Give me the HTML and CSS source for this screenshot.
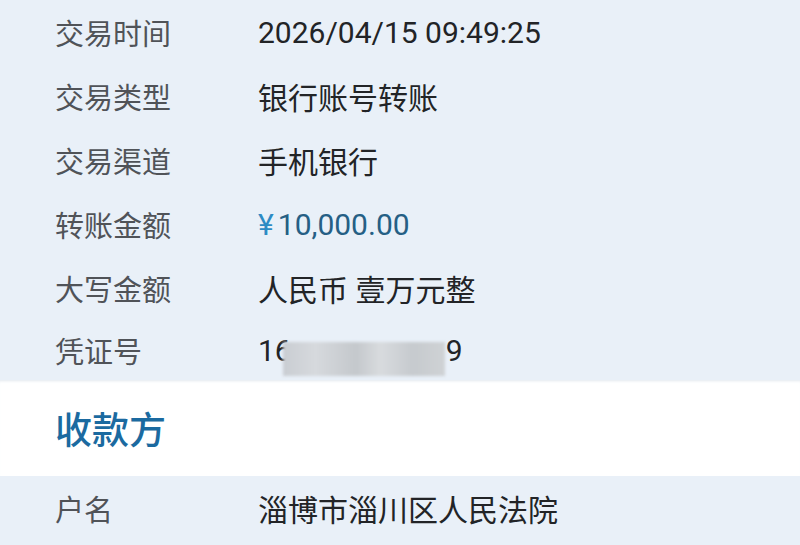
FILE: index.html
```html
<!DOCTYPE html>
<html lang="zh-CN">
<head>
<meta charset="utf-8">
<link rel="stylesheet" href="styles.css">
</head>
<body>
<div class="page">
  <section class="group">
    <div class="row"><span class="label">交易时间</span><span class="value">2026/04/15 09:49:25</span></div>
    <div class="row"><span class="label">交易类型</span><span class="value">银行账号转账</span></div>
    <div class="row"><span class="label">交易渠道</span><span class="value">手机银行</span></div>
    <div class="row"><span class="label">转账金额</span><span class="value amount"><span class="yen">¥</span>10,000.00</span></div>
    <div class="row"><span class="label">大写金额</span><span class="value">人民币 壹万元整</span></div>
    <div class="row last"><span class="label">凭证号</span><span class="value voucher">16<span class="gap"></span>9<span class="blur"></span></span></div>
  </section>
  <div class="section-title">收款方</div>
  <section class="group">
    <div class="row"><span class="label">户名</span><span class="value">淄博市淄川区人民法院</span></div>
  </section>
</div>
</body>
</html>
```
FILE: styles.css
```css
html, body {
  margin: 0;
  padding: 0;
}
body {
  background: #e9f0f8;
  font-family: Roboto, "Noto Sans CJK SC", sans-serif;
  width: 800px;
  height: 545px;
  overflow: hidden;
}
.page {
  display: flex;
  flex-direction: column;
}
.group {
  background: #e9f0f8;
  display: flex;
  flex-direction: column;
}
.row {
  display: flex;
  align-items: center;
  height: 64px;
  padding-left: 55px;
}
.row.last {
  height: 60px;
}
.label {
  width: 203px;
  font-size: 29px;
  color: #505358;
  font-family: "Noto Sans CJK SC", sans-serif;
}
.value {
  font-size: 30px;
  color: #222427;
}
.amount {
  color: #255f85;
}
.yen {
  color: #2d8bc4;
  margin-right: 4px;
}
.voucher {
  position: relative;
}
.gap {
  display: inline-block;
  width: 154px;
}
.blur {
  position: absolute;
  left: 25px;
  top: 9px;
  width: 162px;
  height: 34px;
  background: linear-gradient(90deg, #c9cdd2 0%, #d6d9dd 20%, #c4c8cc 45%, #d8dbde 60%, #c6cace 80%, #cfd2d5 100%);
  filter: blur(1.5px);
}
.section-title {
  background: #ffffff;
  height: 96px;
  display: flex;
  align-items: center;
  padding-left: 55px;
  font-size: 37px;
  font-weight: 500;
  color: #1b6aa0;
  font-family: "Noto Sans CJK SC", sans-serif;
  box-shadow: inset 0 3px 3px -2px #e2e8ee;
}
```
